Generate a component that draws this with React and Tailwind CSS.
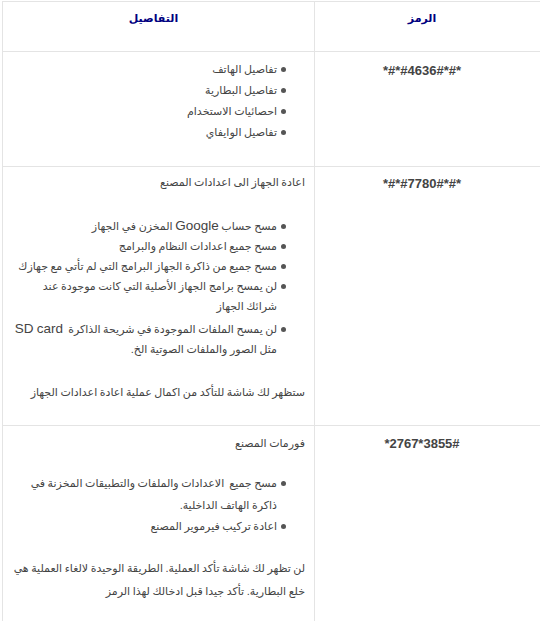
import React from "react";

function Item({ children, className = "" }) {
  return (
    <li className={`flex items-start gap-[4px] ${className}`}>
      <span className="mt-[8px] w-[5px] h-[5px] shrink-0 rounded-full bg-[#555]" />
      <span>{children}</span>
    </li>
  );
}

const rows = [
  {
    code: "*#*#4636#*#*",
    pad: "pt-[7px] pb-[23px]",
    codePad: "pt-[8px]",
    details: (
      <ul className="pr-[19px] leading-[21px]">
        <Item>تفاصيل الهاتف</Item>
        <Item>تفاصيل البطارية</Item>
        <Item>احصائيات الاستخدام</Item>
        <Item>تفاصيل الوايفاي</Item>
      </ul>
    ),
  },
  {
    code: "*#*#7780#*#*",
    pad: "pt-[5px] pb-[23px]",
    codePad: "pt-[6px]",
    details: (
      <>
        <p className="leading-[21px]">اعادة الجهاز الى اعدادات المصنع</p>
        <ul className="pr-[19px] mt-[23px] leading-[20px]">
          <Item>
            مسح حساب <span className="text-[13.5px] leading-[14px]">Google</span> المخزن في الجهاز
          </Item>
          <Item>مسح جميع اعدادات النظام والبرامج</Item>
          <Item>مسح جميع من ذاكرة الجهاز البرامج التي لم تأتي مع جهازك</Item>
          <Item>
            لن يمسح برامج الجهاز الأصلية التي كانت موجودة عند
            <br />
            شرائك الجهاز
          </Item>
          <Item className="pt-[3px]">
            لن يمسح الملفات الموجودة في شريحة الذاكرة&nbsp;{" "}
            <span className="text-[13.5px] leading-[14px]">SD card</span>
            <br />
            مثل الصور والملفات الصوتية الخ.
          </Item>
        </ul>
        <p className="mt-[23px] leading-[20px]">ستظهر لك شاشة للتأكد من اكمال عملية اعادة اعدادات الجهاز</p>
      </>
    ),
  },
  {
    code: "*2767*3855#",
    pad: "pt-[7px] pb-[23px]",
    codePad: "pt-[7px]",
    details: (
      <>
        <p className="leading-[21px]">فورمات المصنع</p>
        <ul className="pr-[19px] mt-[19px] leading-[21.5px]">
          <Item>
            مسح جميع&nbsp; الاعدادات والملفات والتطبيقات المخزنة في
            <br />
            ذاكرة الهاتف الداخلية.
          </Item>
          <Item>اعادة تركيب فيرموير المصنع</Item>
        </ul>
        <p className="mt-[19px] leading-[23px]">
          لن تظهر لك شاشة تأكد العملية. الطريقة الوحيدة لالغاء العملية هي
          <br />
          خلع البطارية. تأكد جيدا قبل ادخالك لهذا الرمز
        </p>
      </>
    ),
  },
];

export default function App() {
  return (
    <div
      className="w-[540px] h-[621px] overflow-hidden bg-white"
      style={{ fontFamily: '"Liberation Sans", "DejaVu Sans", sans-serif' }}
    >
      <div dir="rtl" className="mt-px ml-[2px] w-[543px] border-t border-l border-[#e4e4e4]">
        {/* header */}
        <div className="grid grid-cols-[231px_311px] border-b border-[#e4e4e4] h-[50px] text-[11px] font-bold text-[#000080]">
          <div className="border-l border-[#e4e4e4] pr-[16px] pt-[8px] text-center">الرمز</div>
          <div className="pt-[8px] pr-[10px] text-center">التفاصيل</div>
        </div>

        {rows.map((row) => (
          <div key={row.code} className="grid grid-cols-[231px_311px] border-b border-[#e4e4e4]">
            <div
              dir="ltr"
              className={`border-l border-[#e4e4e4] pr-[16px] ${row.codePad} text-center text-[13px] leading-[21px] font-bold text-[#444]`}
            >
              {row.code}
            </div>
            <div
              className={`pr-[9px] pl-[4px] ${row.pad} text-[11px] text-[#444] whitespace-nowrap [word-spacing:-0.5px]`}
            >
              {row.details}
            </div>
          </div>
        ))}
      </div>
    </div>
  );
}
